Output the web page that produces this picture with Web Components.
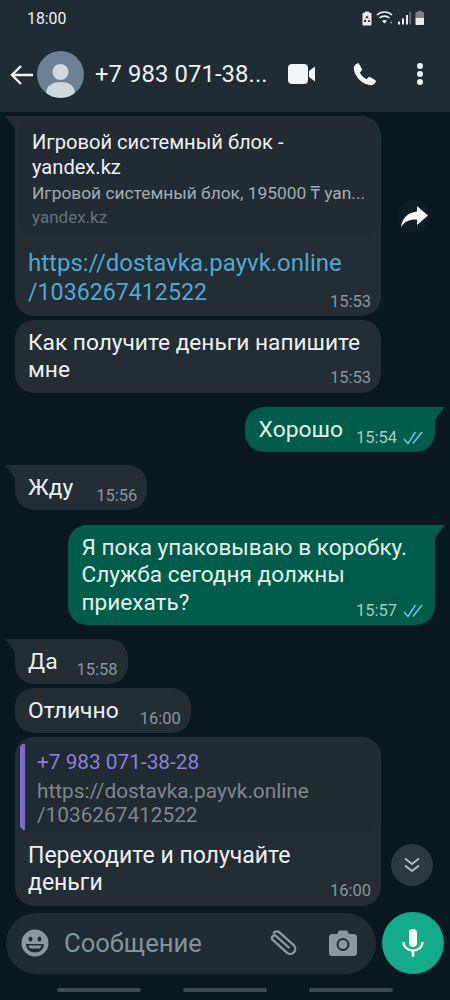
<!DOCTYPE html>
<html lang="ru"><head><meta charset="utf-8">
<style>
html,body{margin:0;padding:0;background:#0a1821}
body{width:450px;height:1000px;overflow:hidden;font-family:Roboto,"Noto Sans",sans-serif;color:#e9edef;display:flex;flex-direction:column}
wa-chat{flex:1}
</style></head><body>
<wa-header></wa-header>
<wa-chat>
  <wa-bubble time="15:53" tail stacked style="margin-top:4px;width:366px;height:200px">
    <wa-preview slot="top" title="Игровой системный блок - yandex.kz" desc="Игровой системный блок, 195000 ₸ yan..." site="yandex.kz"></wa-preview>
    <span style="color:#4fa9d6;line-height:28px"><span style="font-size:24px">https://dostavka.payvk.online</span><br><span style="font-size:23.2px">/1036267412522</span></span>
  </wa-bubble>
  <wa-bubble time="15:53" stacked style="margin-top:4px;width:366px;font-size:22.7px">Как получите деньги напишите<br>мне</wa-bubble>
  <wa-bubble out time="15:54" tail ticks style="margin-top:14.5px">Хорошо</wa-bubble>
  <wa-bubble time="15:56" tail style="margin-top:13px;--gap:23px">Жду</wa-bubble>
  <wa-bubble out time="15:57" tail ticks stacked style="margin-top:15px;width:367px;font-size:22.6px">Я пока упаковываю в коробку.<br>Служба сегодня должны<br>приехать?</wa-bubble>
  <wa-bubble time="15:58" tail style="margin-top:14px;--gap:19px">Да</wa-bubble>
  <wa-bubble time="16:00" style="margin-top:4px;--gap:21px">Отлично</wa-bubble>
  <wa-bubble time="16:00" stacked style="margin-top:4px;width:366px;font-size:23px">
    <wa-quote slot="top" name="+7 983 071-38-28" text="https://dostavka.payvk.online&#10;/1036267412522"></wa-quote>
    Переходите и получайте<br>деньги
  </wa-bubble>
  <wa-float kind="forward" style="left:398px;top:88px"></wa-float>
  <wa-float kind="down" style="left:391px;top:732px"></wa-float>
</wa-chat>
<wa-composer></wa-composer>
<wa-navbar></wa-navbar>
<script>
function def(name, css, html, setup){
  customElements.define(name, class extends HTMLElement{
    connectedCallback(){
      if(this.shadowRoot) return;
      const r=this.attachShadow({mode:'open'});
      r.innerHTML='<style>'+css+'</style>'+(typeof html==='function'?html(this):html);
      if(setup) setup(r,this);
    }
  });
}
def('wa-header',`
:host{display:block;background:#1f2c34;height:112px;flex:none;color:#eef1f2}
.status{height:38px;display:flex;align-items:center;justify-content:space-between;padding:0 25px 0 27px;font-size:15.800px;line-height:20px}
.status svg{display:block}
.bar{display:flex;align-items:center;height:72px;padding:0 0 0 10px;box-sizing:border-box}
.back{width:24px;height:22px;flex:none;margin-top:2px}
.av{width:47px;height:47px;flex:none;margin:0 0 0 3px;border-radius:50%;background:#6b8090;overflow:hidden}
.name{font-size:23.800px;margin-left:11px;width:176px;flex:none;white-space:nowrap;letter-spacing:.1px}
.video{margin-left:17px;width:28px;height:20px;flex:none}
.call{margin-left:36px;width:25px;height:25px;flex:none}
.more{margin-left:39px;width:8px;height:24px;flex:none}
`,`
<div class="status"><span>18:00</span>
<svg width="65" height="20" viewBox="0 0 65 20" fill="#e8ecee">
<path fill-rule="evenodd" d="M2.500 5c0-.8.500-1.300 1.300-1.300H5V2.500h4v1.200h1.200c.8 0 1.300.5 1.300 1.300v10.500c0 .5-.4 1-1 1h-7c-.6 0-1-.5-1-1zM7 6.500l-1.800 2.800h3.600zM4.500 10.500L3.800 13h2.400v-1.500zM9.500 10.500l-1.300 1V13h2z"/>
<path d="M17 6a11 11 0 0 1 15 0" fill="none" stroke="#e8ecee" stroke-width="1.600"/><path d="M19.500 9a7.500 7.500 0 0 1 10 0" fill="none" stroke="#e8ecee" stroke-width="1.600"/><path d="M22 12a4 4 0 0 1 5 0l-2.500 2.500z"/>
<circle cx="31" cy="13.500" r="1" opacity=".6"/>
<rect x="38" y="12.500" width="2" height="3"/><rect x="42" y="9.500" width="2" height="6"/><rect x="46" y="6" width="2" height="9.500"/><rect x="49.500" y="3" width="1.300" height="12.500" opacity=".45"/>
<path d="M55.500 4c0-.6.400-1 1-1H58V1.800h3.500V3H63c.6 0 1 .4 1 1v5h-8.500z" opacity=".45"/><path d="M55.500 9H64v6c0 .6-.4 1-1 1h-6.500c-.6 0-1-.4-1-1z"/></svg></div>
<div class="bar">
<svg class="back" viewBox="0 0 24 22" fill="none" stroke="#f2f4f5" stroke-width="2.400"><path d="M23 11H2M11 2l-9 9 9 9"/></svg>
<div class="av"><svg width="47" height="47" viewBox="0 0 47 47" fill="#cfd8dc"><circle cx="23.500" cy="21" r="8"/><path d="M9 43c0-9 7-12 14.500-12S38 34 38 43c-4 3-9 4-14.500 4S13 46 9 43z"/></svg></div>
<div class="name">+7 983 071-38...</div>
<svg class="video" viewBox="0 0 28 20" fill="#f2f4f5"><rect x="0" y="0" width="20" height="20" rx="4"/><path d="M21 7l6-4.500v15L21 13z"/></svg>
<svg class="call" viewBox="0 0 24 24" fill="#f2f4f5"><path d="M6.600 1.500l3 5.200c.3.500.2 1-.2 1.400L7.500 10c1.300 2.800 3.600 5.200 6.500 6.500l1.900-1.900c.4-.4 1-.5 1.400-.2l5.200 3c.5.300.6.800.4 1.300-1 2.600-3 3.800-5.100 3.600C9.600 21.500 2.600 14.500 1.700 6.300 1.500 4.200 2.800 2.300 5.300 1.200c.5-.2 1-.1 1.300.3z"/></svg>
<svg class="more" viewBox="0 0 8 24" fill="#f2f4f5"><circle cx="4" cy="4" r="3"/><circle cx="4" cy="12" r="3"/><circle cx="4" cy="20" r="3"/></svg>
</div>`);
def('wa-chat',`
:host{display:flex;flex-direction:column;align-items:flex-start;padding:0 15px;position:relative;min-height:0}
`,`<slot></slot>`);
def('wa-bubble',`
:host{display:flex;flex-direction:column;position:relative;box-sizing:border-box;background:#222d34;border-radius:19px;padding:4px;font-size:22.800px;line-height:27.500px;color:#eef1f2}
:host([out]){background:#005c4b;align-self:flex-end;color:#e4f0ec}
:host([tail]){border-top-left-radius:0}
:host([tail][out]){border-top-left-radius:19px;border-top-right-radius:0}
.tail{display:none;position:absolute;top:0;left:-10px;width:11px;height:14px;background:#222d34;clip-path:polygon(0 0,100% 0,100% 100%)}
:host([tail]) .tail{display:block}
:host([tail][out]) .tail{left:auto;right:-10px;background:#005c4b;clip-path:polygon(0 0,100% 0,0 100%)}
.row{display:flex;align-items:flex-end;padding:4.500px 10px 5px 9px;white-space:nowrap}
:host([out]) .row{padding-left:9.500px}
.t{white-space:nowrap;display:flex;align-items:center;gap:6px;font-size:16.500px;line-height:18px;color:#8b979d;margin-left:var(--gap,21px);margin-right:-4px;margin-bottom:-3.500px}
:host([out]) .t{color:#a9cabf;margin-left:13px;margin-right:-2px}
:host([stacked]) .row{flex-direction:column;align-items:stretch}
:host([stacked]) .t{align-self:flex-end;margin-top:-14.500px}
svg{display:none}
:host([ticks]) svg{display:block}
`,b=>`<div class="tail"></div><slot name="top"></slot><div class="row"><div><slot></slot></div><div class="t"><span>${b.getAttribute('time')}</span><svg width="20" height="14" viewBox="0 0 20 14" fill="none" stroke="#6cc6e4" stroke-width="1.500"><path d="M1 8l4 4.500L12.500 1M10 12.500L19 1"/></svg></div></div>`);
def('wa-preview',`
:host{display:block;background:#202b32;border-radius:14px;height:118px;box-sizing:border-box;padding:10px 12px 0 13px;margin-bottom:8.500px}
.a{font-size:20.100px;line-height:25px;color:#eef1f2;width:300px}
.b{font-size:17.350px;line-height:24px;color:#a4adb2;white-space:nowrap;margin-top:1px}
.c{font-size:17px;line-height:23px;color:#667279;margin-top:1px}
`,b=>`<div class="a">${b.getAttribute('title')}</div><div class="b">${b.getAttribute('desc')}</div><div class="c">${b.getAttribute('site')}</div>`);
def('wa-quote',`
:host{display:block;position:relative;background:#202b32;border-radius:10px;height:91px;box-sizing:border-box;padding:9px 0 0 18px;overflow:hidden;margin-bottom:5px}
:host::before{content:"";position:absolute;left:1px;top:3px;bottom:2px;width:5px;border-radius:3px 0 0 3px;background:#7f6ccf}
.n{font-size:20.800px;line-height:25px;color:#8f7fdb}
.x{font-size:20.800px;line-height:23.500px;color:#7d888e;white-space:pre-line;margin-top:5px}
`,b=>`<div class="n">${b.getAttribute('name')}</div><div class="x">${b.getAttribute('text')}</div>`);
def('wa-float',`
:host{position:absolute;display:flex;align-items:center;justify-content:center;border-radius:50%}
:host([kind=forward]){width:32px;height:32px;background:#121e26}
:host([kind=down]){width:42px;height:42px;background:#2b3840}
`,b=>b.getAttribute('kind')==='forward'
?`<svg width="27" height="21" viewBox="0 0 27 21" fill="#f4f6f7"><path d="M16 0l11 9.500L16 19v-5.500C9 13.500 4 15 0 21c1-8 6-14.500 16-15.500z"/></svg>`
:`<svg width="18" height="16" viewBox="0 0 18 16" fill="none" stroke="#aeb8bd" stroke-width="2"><path d="M2 1.500l7 5.500 7-5.500M2 8.500l7 5.500 7-5.500"/></svg>`);
def('wa-composer',`
:host{display:flex;flex:none;align-items:center;height:62px;padding:0 6px;box-sizing:border-box;gap:6px}
.box{width:370px;height:61px;flex:none;border-radius:31px;background:#1f2c34;display:flex;align-items:center;box-sizing:border-box;padding-left:15px}
.e{flex:none;width:28px;height:28px}
.ph{font-size:25.600px;color:#84939c;margin-left:15px;width:191px;flex:none;white-space:nowrap}
.clip{flex:none;width:32px;height:32px;margin-left:13px}
.cam{flex:none;width:28px;height:26px;margin-left:29px}
.mic{width:62px;height:62px;flex:none;border-radius:50%;background:#14ab8a;display:flex;align-items:center;justify-content:center}
`,`
<div class="box">
<svg class="e" viewBox="0 0 28 28"><circle cx="14" cy="14" r="13.500" fill="#8b989f"/><ellipse cx="9.500" cy="10" rx="2" ry="2.600" fill="#1f2c34"/><ellipse cx="18.500" cy="10" rx="2" ry="2.600" fill="#1f2c34"/><path d="M5 15h18c0 5-4 8.500-9 8.500S5 20 5 15z" fill="#1f2c34"/><path d="M7.500 16.500h13c-.5 1.500-1 2.200-2 3h-9c-1-.8-1.500-1.500-2-3z" fill="#8b989f"/></svg>
<div class="ph">Сообщение</div>
<svg class="clip" viewBox="0 0 32 32" fill="none" stroke="#8b989f" stroke-width="2.300" stroke-linecap="round"><g transform="translate(14.500,15.500) rotate(42)"><path d="M8-.5H-9a2.500 2.500 0 0 0 0 5H10a5 5 0 0 0 0-10H-9a4 4 0 0 0-4 4"/></g></svg>
<svg class="cam" viewBox="0 0 28 26" fill="#8b989f"><path d="M3 4h5l2-3.500h8L20 4h5c1.600 0 3 1.400 3 3v16c0 1.600-1.400 3-3 3H3c-1.600 0-3-1.400-3-3V7c0-1.600 1.400-3 3-3z"/><circle cx="14" cy="14.500" r="6.500" fill="#1f2c34"/><circle cx="14" cy="14.500" r="4.500" fill="#8b989f"/></svg>
</div>
<div class="mic"><svg width="22" height="28" viewBox="0 0 22 28" fill="none" stroke="#fff"><rect x="7" y="0" width="8" height="18" rx="4" fill="#fff" stroke="none"/><path d="M1.500 13c0 5 4 8.500 9.500 8.500S20.500 18 20.500 13" stroke-width="2.200"/><path d="M11 21v7" stroke-width="2.600"/></svg></div>`);
def('wa-navbar',`
:host{display:flex;flex:none;height:26px;justify-content:center;gap:42px;box-sizing:border-box;padding-top:14px}
i{width:84px;height:4px;border-radius:2px;background:#3f4b50}
`,`<i></i><i></i><i></i>`);
</script></body></html>
